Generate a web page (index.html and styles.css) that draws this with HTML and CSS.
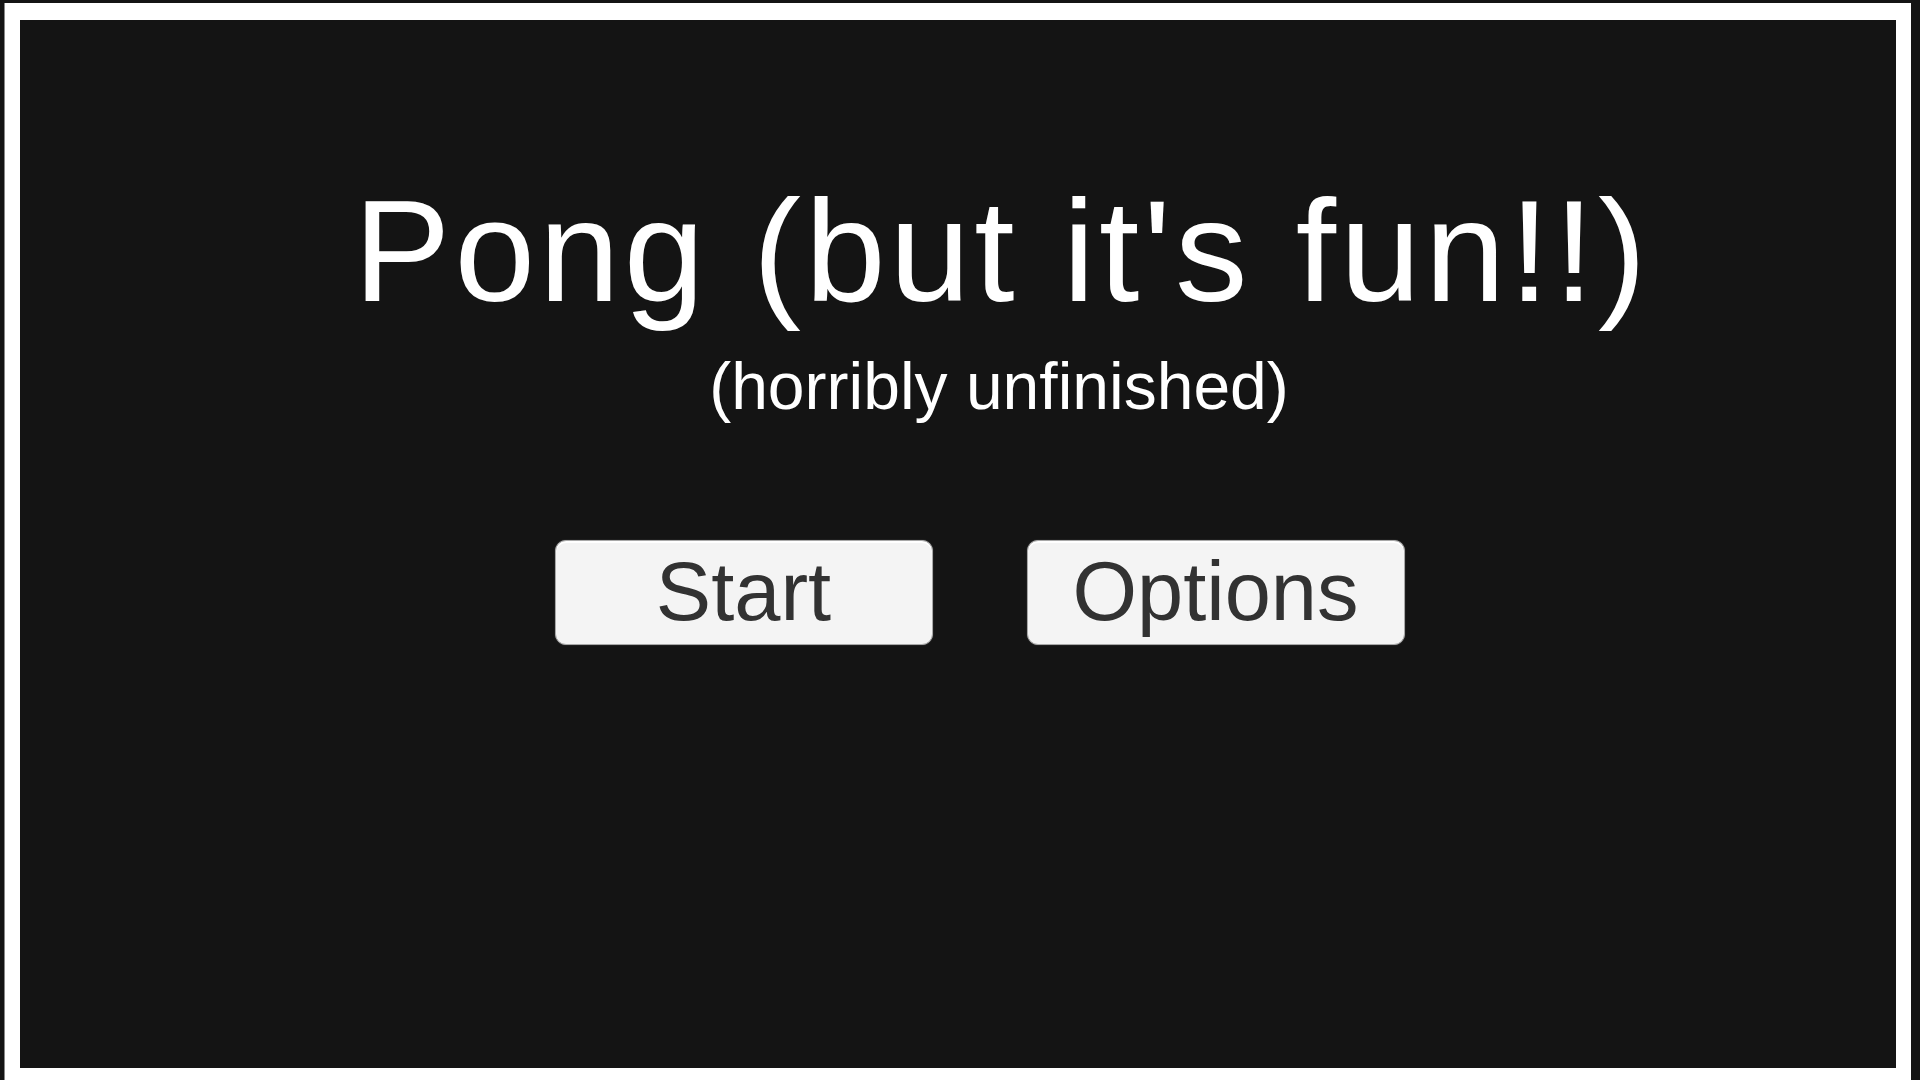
FILE: index.html
```html
<!DOCTYPE html>
<html lang="en">
<head>
  <meta charset="UTF-8">
  <title>Pong (but it's fun!!)</title>
  <link rel="stylesheet" href="styles.css">
</head>
<body>
  <div class="frame">
    <main class="menu">
      <h1 class="title">Pong (but it's fun!!)</h1>
      <p class="subtitle">(horribly unfinished)</p>
      <div class="buttons">
        <button class="menu-btn">Start</button>
        <button class="menu-btn">Options</button>
      </div>
    </main>
  </div>
</body>
</html>
```

FILE: styles.css
```css
html, body {
  margin: 0;
  height: 100%;
  overflow: hidden;
}

body {
  background: #141414;
  font-family: 'Liberation Sans', Arial, sans-serif;
}

/* White game frame */
.frame {
  margin: 3px 9px 0 5px;
  border: solid #fff;
  border-width: 17px 15px 12px 15px;
  height: 1048px;
  box-shadow: -1px 0 0 #888;
}

.menu {
  height: 100%;
  background: #141414;
  display: flex;
  flex-direction: column;
  align-items: center;
  padding-top: 159px;
  box-sizing: border-box;
}

.title {
  margin: 0;
  padding-left: 88px;
  font-size: 145px;
  font-weight: normal;
  line-height: 1;
  letter-spacing: 4px;
  color: #fff;
}

.subtitle {
  margin: 29px 0 0;
  padding-left: 82px;
  font-size: 66px;
  line-height: 1;
  color: #fff;
}

.buttons {
  display: flex;
  gap: 94px;
  margin-top: 121px;
  padding-left: 43px;
}

.menu-btn {
  width: 378px;
  height: 105px;
  display: flex;
  align-items: center;
  justify-content: center;
  padding: 0 0 2px;
  font-family: 'Liberation Sans', Arial, sans-serif;
  font-size: 83px;
  line-height: 1;
  color: #323232;
  background: #f4f4f4;
  border: 1px solid #a8a8a8;
  border-radius: 11px;
  box-shadow: inset 0 2px 0 #fff, 0 0 1px #777;
  cursor: pointer;
}
```
